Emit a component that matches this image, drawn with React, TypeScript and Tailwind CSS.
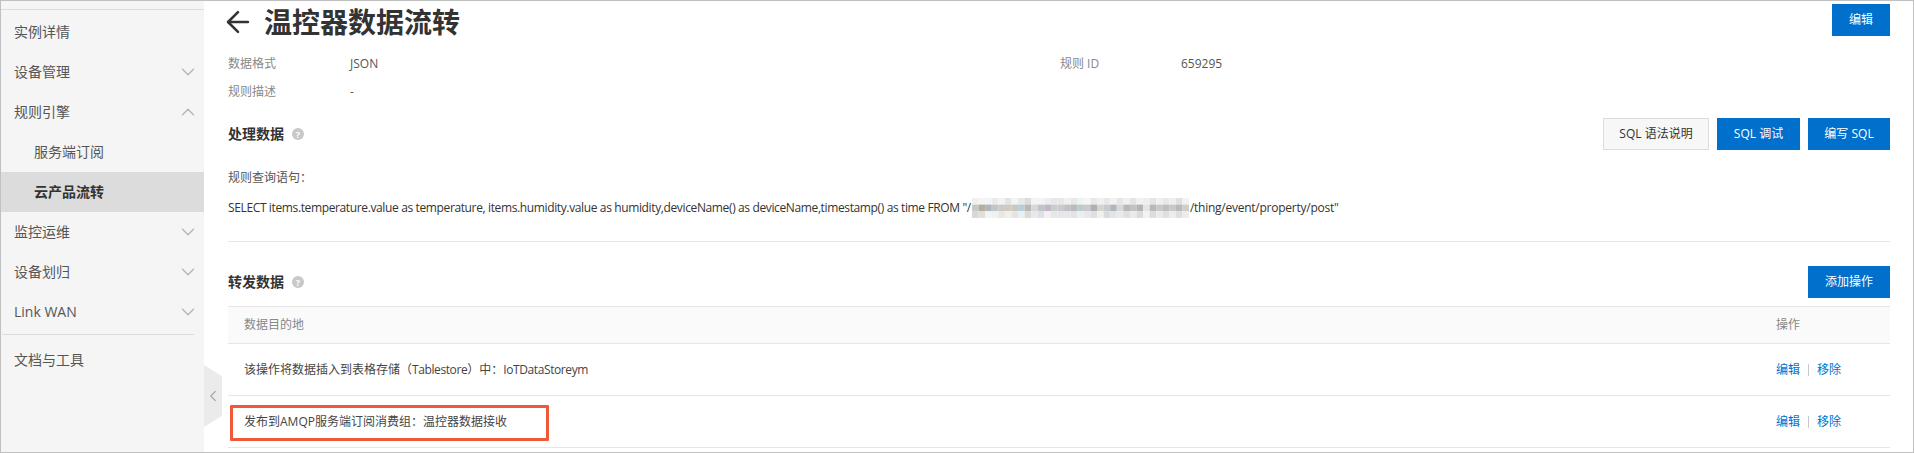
import { ArrowLeft, ChevronDown, ChevronLeft, ChevronUp } from 'lucide-react';

const menu = [
  { label: '实例详情' },
  { label: '设备管理', icon: 'down' },
  { label: '规则引擎', icon: 'up' },
  { label: '服务端订阅', sub: true },
  { label: '云产品流转', sub: true, active: true },
  { label: '监控运维', icon: 'down' },
  { label: '设备划归', icon: 'down' },
  { label: 'Link WAN', icon: 'down' },
];

const mosaicRows = [
  ['#f0f0f0', '#f4f4f4', '#f2f5f5', '#ecebe8', '#f2f2f2', '#e4e4e4', '#f2f5f5', '#e8e8e8', '#dcdcdc', '#f4f4f4', '#f5f3f5', '#eeecee', '#e8e8e6', '#e8e8e8', '#f0f0f0', '#e8e8e8', '#f0f3f3', '#f6f6f6', '#e8e8e8', '#f0f0f0', '#e8e8e8', '#f2f2f2', '#e6e6e6', '#f0f0f0', '#e4e4e4', '#f2f2f2', '#eeeeee', '#e4e4e4', '#f0f0f0', '#e8e8e8', '#eeeeee', '#e0e0e0', '#f2f2f2'],
  ['#c4cbc4', '#b4ae9f', '#b0b7bc', '#c0c7c7', '#cacaca', '#cccbbd', '#cacabc', '#b6cfd9', '#babab0', '#d8d8d8', '#bfc4cb', '#c3b7cb', '#c8cec9', '#cdc8cd', '#c3bdc7', '#b6bbbb', '#bccacd', '#cacaca', '#aeaeb3', '#d6d2cc', '#cacaca', '#b0b6c0', '#d8d8d8', '#b8b8b6', '#c2c2c2', '#b3b3b8', '#e4e4e4', '#b8b8b8', '#c8c8c8', '#bebebe', '#c8c8c8', '#bababa', '#cecece'],
  ['#d8d8d8', '#dee0d5', '#eff4f5', '#eff1f1', '#e8e7e1', '#f0f0ea', '#e4e4e2', '#e8f0f2', '#dadad6', '#e8e8e8', '#dfdfe4', '#f1f1f4', '#e5e8e6', '#eae5ea', '#e7e7ea', '#e1e4e4', '#eaeff0', '#e8e8e8', '#dfdfdf', '#f0f0ec', '#dbdbdb', '#e2e4e6', '#e9e9e9', '#dfdfdf', '#eaeaea', '#dbdbdb', '#f2f2f2', '#dddddd', '#eaeaea', '#dfdfdf', '#ececec', '#dfdfdf', '#ececec'],
];

function HelpDot() {
  return (
    <span className="ml-2 flex h-3 w-3 items-center justify-center rounded-full bg-[#c8c8c8] text-[9px] font-bold leading-none text-white">
      ?
    </span>
  );
}

function PrimaryButton({ label, className }: { label: string; className: string }) {
  return (
    <button className={`flex h-8 items-center justify-center bg-[#0070cc] text-xs text-white ${className}`}>{label}</button>
  );
}

function Mosaic() {
  return (
    <svg width="217" height="20" viewBox="0 0 217 20" className="mx-px inline-block shrink-0">
      {mosaicRows.map((row, r) =>
        row.map((fill, c) => (
          <rect key={`${r}-${c}`} x={c * 6.58} y={r * 6.6} width="6.6" height="6.7" fill={fill} />
        )),
      )}
    </svg>
  );
}

function RowActions() {
  return (
    <div className="flex w-[114px] items-center text-[#0070cc]">
      <span>编辑</span>
      <span className="mx-2 h-3 w-px bg-[#c8c8c8]" />
      <span>移除</span>
    </div>
  );
}

function Sidebar() {
  return (
    <aside className="relative w-[203px] shrink-0 bg-[#f5f5f5] text-sm text-[#555]">
      <div className="h-[9px] border-b border-[#dcdcdc]" />
      <div className="pt-0.5">
        {menu.map((item) => (
          <div
            key={item.label}
            className={`flex h-10 items-center justify-between pr-[5px] ${item.sub ? 'pl-[33px]' : 'pl-[13px]'} ${
              item.active ? 'bg-[#dcdcdc] font-bold text-[#333]' : ''
            }`}
          >
            <span>{item.label}</span>
            {item.icon === 'down' && <ChevronDown size={22} strokeWidth={1.4} className="text-[#b4b4b4]" />}
            {item.icon === 'up' && <ChevronUp size={22} strokeWidth={1.4} className="text-[#b4b4b4]" />}
          </div>
        ))}
      </div>
      <div className="mt-0.5 mr-[10px] ml-px border-t border-[#dcdcdc]" />
      <div className="mt-[5px] flex h-10 items-center pl-[13px]">文档与工具</div>
      <div className="absolute top-[364px] -right-[18px] flex h-[62px] w-[18px] items-center justify-center bg-[#ebebeb] [clip-path:polygon(0_0,100%_18%,100%_82%,0_100%)]">
        <ChevronLeft size={22} strokeWidth={1.6} className="text-[#a8a8a8]" />
      </div>
    </aside>
  );
}

export default function App() {
  return (
    <div className="flex h-[453px] w-[1914px] overflow-hidden border border-[#c0c0c0] bg-white font-['Open_Sans','Noto_Sans_CJK_SC',sans-serif] text-xs text-[#333]">
      <Sidebar />
      <main className="relative min-w-0 flex-1 pr-[23px] pl-6">
        <header className="flex h-[35px] items-start justify-between pt-[3px]">
          <div className="flex items-center text-[28px] leading-9 font-bold text-[#333]">
            <ArrowLeft size={34} strokeWidth={1.8} className="-ml-[7px] mr-[9px]" />
            <h1>温控器数据流转</h1>
          </div>
          <PrimaryButton label="编辑" className="w-[58px]" />
        </header>

        <div className="mt-[14px] grid grid-cols-[122px_710px_121px_1fr] text-[#888]">
          <div className="flex h-7 items-center">数据格式</div>
          <div className="flex h-7 items-center text-[#555]">JSON</div>
          <div className="flex h-7 items-center">规则 ID</div>
          <div className="flex h-7 items-center text-[#555]">659295</div>
          <div className="flex h-7 items-center">规则描述</div>
          <div className="flex h-7 items-center text-[#555]">-</div>
        </div>

        <section className="mt-3 flex items-center justify-between">
          <div className="flex items-center text-sm font-bold">
            处理数据
            <HelpDot />
          </div>
          <div className="flex gap-2">
            <button className="h-8 w-[106px] border border-[#dcdcdc] bg-[#f7f7f7] text-xs text-[#333]">SQL 语法说明</button>
            <PrimaryButton label="SQL 调试" className="w-[83px]" />
            <PrimaryButton label="编写 SQL" className="w-[82px]" />
          </div>
        </section>

        <p className="mt-[18px] leading-5 text-[#555]">规则查询语句：</p>
        <div className="mt-[10px] flex h-5 items-center whitespace-nowrap">
          <span className="tracking-[-0.37px]">
            SELECT items.temperature.value as temperature, items.humidity.value as humidity,deviceName() as deviceName,timestamp() as time FROM "/
          </span>
          <Mosaic />
          <span className="tracking-[-0.25px]">/thing/event/property/post"</span>
        </div>

        <div className="mt-[23px] border-t border-[#e6e6e6]" />

        <section className="mt-6 flex items-center justify-between">
          <div className="flex items-center text-sm font-bold">
            转发数据
            <HelpDot />
          </div>
          <PrimaryButton label="添加操作" className="w-[82px]" />
        </section>

        <div className="mt-2">
          <div className="flex h-[38px] items-center justify-between border-y border-[#e6e6e6] bg-[#fafafa] pl-4 text-[#888]">
            <span>数据目的地</span>
            <span className="w-[114px]">操作</span>
          </div>
          <div className="flex h-[52px] items-center justify-between border-b border-[#e6e6e6] pl-4 text-[#444]">
            <span>
              该操作将数据插入到表格存储（<span className="tracking-[-0.4px]">Tablestore</span>）中：
              <span className="tracking-[-0.4px]">IoTDataStoreym</span>
            </span>
            <RowActions />
          </div>
          <div className="flex h-[52px] items-center justify-between border-b border-[#e6e6e6] pl-4 text-[#444]">
            <span>发布到AMQP服务端订阅消费组：温控器数据接收</span>
            <RowActions />
          </div>
        </div>

        <div className="absolute top-[404px] left-[26px] h-[36px] w-[319px] rounded-[1px] border-[3px] border-[#f0583a]" />
      </main>
    </div>
  );
}
